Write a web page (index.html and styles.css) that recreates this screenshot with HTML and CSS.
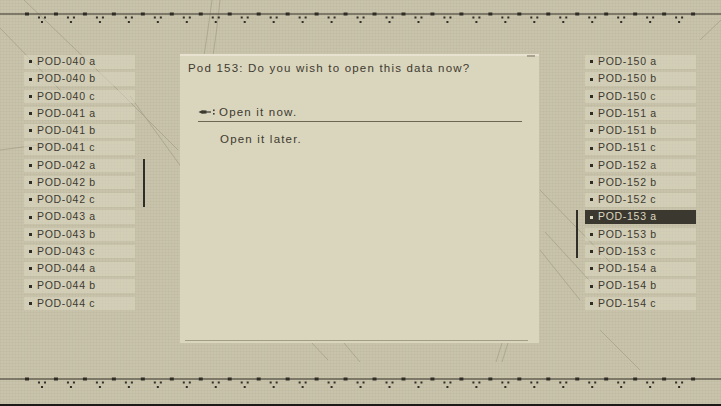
FILE: index.html
```html
<!DOCTYPE html>
<html>
<head>
  <title>Archives - Pod Data</title>
  <link rel="stylesheet" href="styles.css">
</head>
<body>
  <div class="screen">
    <!-- faint scratch lines drawn behind the menu -->
    <svg class="backdrop" width="721" height="406" viewBox="0 0 721 406">
      <g stroke="#8f8a74" stroke-width="0.8" fill="none" opacity="0.55">
        <path d="M0 28 L62 92" />
        <path d="M24 0 L120 92 L178 150" />
        <path d="M130 96 L182 168" />
        <path d="M0 150 L60 142" />
        <path d="M212 0 Q208 30 204 56" />
        <path d="M220 0 Q217 30 213 56" />
        <path d="M312 343 L328 360" />
        <path d="M344 343 L360 362" />
        <path d="M502 343 L496 362" />
        <path d="M508 343 L502 362" />
        <path d="M540 190 L610 262" />
        <path d="M545 232 L600 292" />
        <path d="M580 300 L540 250" />
        <path d="M700 40 L721 20" />
        <path d="M600 330 L640 370" />
      </g>
    </svg>

    <div class="rail rail-top">
      <svg width="721" height="30" viewBox="0 0 721 30">
        <defs>
          <pattern id="ticks" width="28.96" height="30" patternUnits="userSpaceOnUse" x="25" y="0">
            <rect x="0" y="12.5" width="4" height="3" fill="#2f2c26" />
            <rect x="13" y="16.5" width="2" height="2" fill="#2f2c26" />
            <rect x="19" y="16.5" width="2" height="2" fill="#2f2c26" />
            <rect x="16" y="21" width="2" height="2" fill="#2f2c26" />
          </pattern>
        </defs>
        <rect x="0" y="13.3" width="721" height="1.4" fill="#5e5a4c" />
        <rect x="24" y="0" width="674" height="30" fill="url(#ticks)" />
      </svg>
    </div>

    <div class="main">
      <div class="pod-list pod-list-left">
        <div class="pod"><span class="mark"></span>POD-040 a</div>
        <div class="pod"><span class="mark"></span>POD-040 b</div>
        <div class="pod"><span class="mark"></span>POD-040 c</div>
        <div class="pod"><span class="mark"></span>POD-041 a</div>
        <div class="pod"><span class="mark"></span>POD-041 b</div>
        <div class="pod"><span class="mark"></span>POD-041 c</div>
        <div class="pod"><span class="mark"></span>POD-042 a</div>
        <div class="pod"><span class="mark"></span>POD-042 b</div>
        <div class="pod"><span class="mark"></span>POD-042 c</div>
        <div class="pod"><span class="mark"></span>POD-043 a</div>
        <div class="pod"><span class="mark"></span>POD-043 b</div>
        <div class="pod"><span class="mark"></span>POD-043 c</div>
        <div class="pod"><span class="mark"></span>POD-044 a</div>
        <div class="pod"><span class="mark"></span>POD-044 b</div>
        <div class="pod"><span class="mark"></span>POD-044 c</div>
        <div class="group-bar group-042"></div>
      </div>

      <div class="panel">
        <div class="panel-title">Pod 153: Do you wish to open this data now?</div>
        <div class="options">
          <div class="option selected">
            <span class="cursor">
              <svg width="18" height="8" viewBox="0 0 18 8">
                <path d="M0.5 4 L4 2.3 L8.5 2.6 L8.5 5.4 L4 5.7 Z" fill="#3d3a30" />
                <rect x="8" y="3.4" width="5" height="1.2" fill="#3d3a30" />
                <rect x="15" y="1.5" width="1.6" height="1.6" fill="#3d3a30" />
                <rect x="15" y="5" width="1.6" height="1.6" fill="#3d3a30" />
              </svg>
            </span>
            Open it now.
          </div>
          <div class="option">
            <span class="cursor"></span>
            Open it later.
          </div>
        </div>
        <div class="panel-foot"></div>
      </div>

      <div class="pod-list pod-list-right">
        <div class="pod"><span class="mark"></span>POD-150 a</div>
        <div class="pod"><span class="mark"></span>POD-150 b</div>
        <div class="pod"><span class="mark"></span>POD-150 c</div>
        <div class="pod"><span class="mark"></span>POD-151 a</div>
        <div class="pod"><span class="mark"></span>POD-151 b</div>
        <div class="pod"><span class="mark"></span>POD-151 c</div>
        <div class="pod"><span class="mark"></span>POD-152 a</div>
        <div class="pod"><span class="mark"></span>POD-152 b</div>
        <div class="pod"><span class="mark"></span>POD-152 c</div>
        <div class="pod active"><span class="mark"></span>POD-153 a</div>
        <div class="pod"><span class="mark"></span>POD-153 b</div>
        <div class="pod"><span class="mark"></span>POD-153 c</div>
        <div class="pod"><span class="mark"></span>POD-154 a</div>
        <div class="pod"><span class="mark"></span>POD-154 b</div>
        <div class="pod"><span class="mark"></span>POD-154 c</div>
        <div class="group-bar group-153"></div>
      </div>
    </div>

    <div class="rail rail-bottom">
      <svg width="721" height="30" viewBox="0 0 721 30">
        <rect x="0" y="13.3" width="721" height="1.4" fill="#5e5a4c" />
        <rect x="24" y="0" width="674" height="30" fill="url(#ticks)" />
      </svg>
    </div>
    <div class="base"></div>
  </div>
</body>
</html>
```

FILE: styles.css
```css
* {
  margin: 0;
  padding: 0;
  box-sizing: border-box;
}

body {
  font-family: "Liberation Sans", Arial, sans-serif;
  background: #c8c3aa;
  color: #3d3a30;
  overflow: hidden;
}

.screen {
  position: relative;
  width: 721px;
  height: 406px;
  display: flex;
  flex-direction: column;
  background-color: #c8c3aa;
  background-image:
    repeating-linear-gradient(0deg, rgba(0, 0, 0, 0.025) 0 1px, transparent 1px 3px),
    repeating-linear-gradient(90deg, rgba(0, 0, 0, 0.02) 0 1px, transparent 1px 3px);
}

.backdrop {
  position: absolute;
  top: 0;
  left: 0;
  pointer-events: none;
}

.rail {
  position: relative;
  flex-shrink: 0;
}

.rail svg {
  display: block;
}

.rail-top {
  height: 54px;
}

.rail-bottom {
  height: 61px;
  padding-top: 22px;
}

.base {
  height: 2px;
  background: #1c1b17;
}

.main {
  position: relative;
  height: 289px;
  display: flex;
  padding-left: 24px;
}

/* pod lists */

.pod-list {
  display: grid;
  grid-auto-rows: 13.5px;
  row-gap: 3.75px;
  padding-top: 1px;
  align-content: start;
}

.pod-list-left {
  grid-template-columns: 111px 2px;
  column-gap: 8px;
  margin-right: 35px;
}

.pod-list-right {
  grid-template-columns: 2px 111px;
  column-gap: 7px;
  margin-left: 37px;
}

.pod-list-left .pod {
  grid-column: 1;
}

.pod-list-right .pod {
  grid-column: 2;
}

.pod {
  display: flex;
  align-items: center;
  padding-left: 5px;
  background: rgba(224, 220, 198, 0.48);
  font-size: 10.5px;
  letter-spacing: 0.7px;
  line-height: 13.5px;
  white-space: nowrap;
  color: #3d3a30;
}

.pod .mark {
  width: 3px;
  height: 3px;
  margin-right: 5px;
  background: #2f2c26;
  flex-shrink: 0;
}

.pod.active {
  background: #3b3830;
  color: #dcd7bf;
}

.pod.active .mark {
  background: #dcd7bf;
}

.group-bar {
  background: #2f2d27;
  width: 2px;
}

.pod-list-left .group-bar {
  grid-column: 2;
}

.pod-list-right .group-bar {
  grid-column: 1;
}

.group-042 {
  grid-row: 7 / span 3;
}

.group-153 {
  grid-row: 10 / span 3;
}

/* dialog panel */

.panel {
  position: relative;
  width: 359px;
  height: 289px;
  display: flex;
  flex-direction: column;
  background: #dad5bd;
  border-top: 2px solid #e7e3d0;
  padding: 5px 8px 0;
}

.panel::before {
  content: "";
  position: absolute;
  top: -1px;
  right: 4px;
  width: 8px;
  height: 1.5px;
  background: #a9a48f;
}

.panel-title {
  font-size: 11.5px;
  line-height: 14px;
  letter-spacing: 1.2px;
  white-space: nowrap;
}

.options {
  margin: 30px 9px 0 10px;
}

.option {
  display: flex;
  align-items: center;
  font-size: 11.5px;
  line-height: 14px;
  letter-spacing: 1.2px;
  padding-bottom: 1.5px;
}

.option.selected {
  border-bottom: 1.5px solid #6c6755;
}

.option + .option {
  margin-top: 10px;
  padding-left: 1px;
}

.cursor {
  width: 21px;
  height: 14px;
  display: flex;
  align-items: center;
  flex-shrink: 0;
}

.panel-foot {
  margin: auto 3px 2px -3px;
  height: 1.5px;
  background: #a29d87;
}
```
